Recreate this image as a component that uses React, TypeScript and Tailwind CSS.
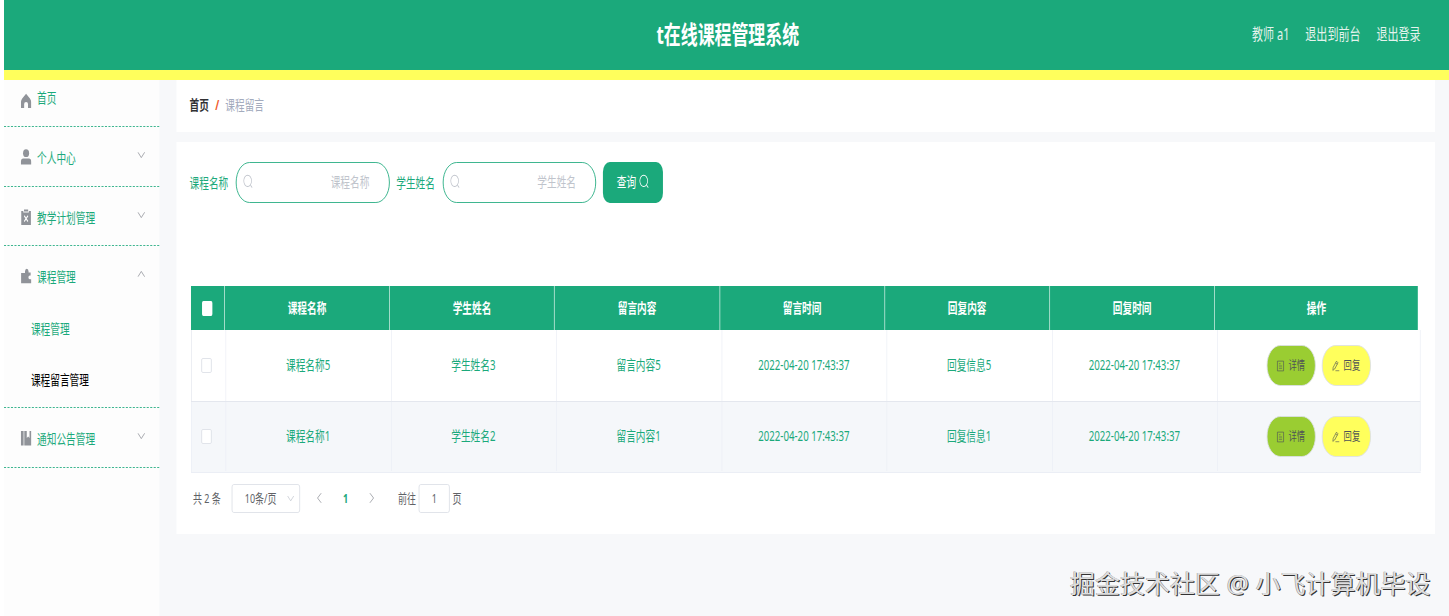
import type { ReactNode } from "react";

type IconProps = { className?: string };

function HomeIcon({ className }: IconProps) {
  return (
    <svg viewBox="0 0 16 16" className={className} fill="currentColor">
      <path d="M8 .8 13.6 5.4Q15.4 7 15.4 9V15H10.8V11Q10.8 9 8 9T5.2 11V15H.6V9Q.6 7 2.4 5.4Z" />
    </svg>
  );
}

function UserIcon({ className }: IconProps) {
  return (
    <svg viewBox="0 0 16 16" className={className} fill="currentColor">
      <ellipse cx="8" cy="4.2" rx="4.4" ry="3.9" />
      <path d="M.5 15.5V13Q.5 9.6 4 9.6H12Q15.5 9.6 15.5 13V15.5Z" />
    </svg>
  );
}

function ClipboardIcon({ className }: IconProps) {
  return (
    <svg viewBox="0 0 16 16" className={className}>
      <path d="M1 2H4V3.6H12V2H15V16H1ZM5 .4H11V2.6H5Z" fill="currentColor" />
      <path d="M5.3 6.8 10.7 12.4M10.7 6.8 5.3 12.4" stroke="#fff" strokeWidth="1.4" />
    </svg>
  );
}

function PuzzleIcon({ className }: IconProps) {
  return (
    <svg viewBox="0 0 16 16" className={className} fill="currentColor">
      <path d="M1 5H6.4V3.4Q6.6 .8 9 .8T11.6 3.4V4.4H14.6V7.6H13.4Q11.4 7.8 11.4 9.4T13.4 11.2H15.5V15.3H.8V5Z" />
    </svg>
  );
}

function NotebookIcon({ className }: IconProps) {
  return (
    <svg viewBox="0 0 16 16" className={className} fill="currentColor">
      <path d="M.5 1H4.4V15.5H.5ZM5.4 1H9V8L11 6.5 13 8V1H15.5V15.5H5.4Z" />
    </svg>
  );
}

function SearchIcon({ className }: IconProps) {
  return (
    <svg viewBox="0 0 16 16" className={className} fill="none" stroke="currentColor" strokeWidth="1.1">
      <circle cx="7.6" cy="7.3" r="6" />
      <path d="m12 11.8 2.6 2.8" />
    </svg>
  );
}

function DocIcon({ className }: IconProps) {
  return (
    <svg viewBox="0 0 16 16" className={className} fill="none" stroke="currentColor">
      <path d="M2 1.5H14V14.5H2ZM5 5H8M5 8H11M5 11H11" />
    </svg>
  );
}

function EditIcon({ className }: IconProps) {
  return (
    <svg viewBox="0 0 16 16" className={className} fill="none" stroke="currentColor">
      <path d="M2.5 13.8 3.2 9.8 9.6 1.6 12.4 3.7 6 12 2.5 13.8ZM8 3.7 10.8 5.8M7.5 14.3H15" />
    </svg>
  );
}

function Chevron({ className }: IconProps) {
  return (
    <svg viewBox="0 0 12 12" className={className} fill="none" stroke="currentColor" strokeWidth="0.9">
      <path d="M1.2 3.3 6 8.6 10.8 3.3" />
    </svg>
  );
}

interface MenuItemProps {
  icon: ReactNode;
  label: string;
  open?: boolean;
}

function MenuTitle({ icon, label, open }: MenuItemProps) {
  return (
    <div className="flex h-[59px] items-center pl-6 pr-5">
      <span className="mt-px text-[#909399]">{icon}</span>
      <span className="ml-2 mt-[2px] flex-1">{label}</span>
      <Chevron className={open ? "mb-[4px] size-3 rotate-180 text-[#909399]" : "mb-[4px] size-3 text-[#909399]"} />
    </div>
  );
}

function Sidebar() {
  return (
    <aside className="h-[536px] w-[225px] shrink-0 bg-[#fdfdfd] text-[#1ba97b]">
      <div className="flex h-[47px] items-start border-b border-dashed border-[#1ba97b] pl-6 pt-[8px]">
        <HomeIcon className="mt-[5px] size-4 text-[#909399]" />
        <span className="ml-2">首页</span>
      </div>
      <div className="border-b border-dashed border-[#1ba97b]">
        <MenuTitle icon={<UserIcon className="size-4" />} label="个人中心" />
      </div>
      <div className="h-[59px] border-b border-dashed border-[#1ba97b]">
        <MenuTitle icon={<ClipboardIcon className="size-4" />} label="教学计划管理" />
      </div>
      <div className="h-[162px] border-b border-dashed border-[#1ba97b]">
        <MenuTitle icon={<PuzzleIcon className="size-4" />} label="课程管理" open />
        <div className="flex h-[48px] items-center pl-[39px]">课程管理</div>
        <div className="flex h-[54px] items-center pl-[39px] text-black">课程留言管理</div>
      </div>
      <div className="border-b border-dashed border-[#1ba97b]">
        <MenuTitle icon={<NotebookIcon className="size-4" />} label="通知公告管理" />
      </div>
    </aside>
  );
}

function SearchField({ label }: { label: string }) {
  return (
    <label className="mr-[10px] flex items-center gap-[10px]">
      <span className="w-[57px] whitespace-nowrap">{label}</span>
      <span className="flex h-[41px] w-[222.5px] items-center justify-between rounded-[20px] border border-[#1ba97b] pb-[2px] pl-[9px] pr-[28px] text-[#c0c4cc]">
        <SearchIcon className="size-[15px]" />
        <span>{label}</span>
      </span>
    </label>
  );
}

const COLUMNS = ["课程名称", "学生姓名", "留言内容", "留言时间", "回复内容", "回复时间", "操作"];

const ROWS = [
  ["课程名称5", "学生姓名3", "留言内容5", "2022-04-20 17:43:37", "回复信息5", "2022-04-20 17:43:37"],
  ["课程名称1", "学生姓名2", "留言内容1", "2022-04-20 17:43:37", "回复信息1", "2022-04-20 17:43:37"],
];

function MessageTable() {
  return (
    <div className="ml-px w-[1782px]">
      <div className="grid h-[44px] w-[1778px] grid-cols-[49px_repeat(6,239.2px)_1fr] bg-[#1ba97b] font-bold text-white">
        <div className="flex items-center justify-center border-r border-[#dff3ec]">
          <span className="mr-px size-[15px] rounded-[2px] bg-white" />
        </div>
        {COLUMNS.map((name) => (
          <div key={name} className="flex items-center justify-center border-r border-[#dff3ec] last:border-r-0">
            {name}
          </div>
        ))}
      </div>
      {ROWS.map((row, i) => (
        <div
          key={row[0]}
          className={
            i % 2
              ? "grid h-[71px] grid-cols-[50px_repeat(6,239.5px)_1fr] border-b border-l border-[#ebeef5] bg-[#f5f7fa] pb-px"
              : "grid h-[72px] grid-cols-[50px_repeat(6,239.5px)_1fr] border-b border-l border-[#e4e7ee] bg-white"
          }
        >
          <div className="flex items-center justify-center border-r border-[#ebeef5]">
            <span className="mr-[6px] size-[15px] rounded-[2px] border border-[#dcdfe6] bg-white" />
          </div>
          {row.map((cell, j) => (
            <div key={j} className="flex items-center justify-center border-r border-[#ebeef5] pb-px pr-px text-[#1ba97b]">
              {cell}
            </div>
          ))}
          <div className="flex items-center justify-center gap-[9px] border-r border-[#ebeef5] pr-px text-xs text-[#4f5357]">
            <button className="flex h-[41px] w-[71px] items-center justify-center gap-[5px] rounded-[20px] border border-[#dcdfe6] bg-[#9acd32]">
              <DocIcon className="size-3" />
              详情
            </button>
            <button className="flex h-[41px] w-[71px] items-center justify-center gap-[5px] rounded-[20px] border border-[#dcdfe6] bg-[#ffff5c]">
              <EditIcon className="size-3" />
              回复
            </button>
          </div>
        </div>
      ))}
    </div>
  );
}

function Pagination() {
  return (
    <div className="mt-[10px] flex h-[30px] items-center pl-[4px] text-[13px] text-[#606266]">
      <span className="w-[56px] whitespace-nowrap">共 2 条</span>
      <div className="flex h-[29px] w-[99px] items-center justify-between rounded-[3px] border border-[#dcdfe6] pl-[18px] pr-[7px]">
        <span>10条/页</span>
        <Chevron className="size-[11px] text-[#c0c4cc]" />
      </div>
      <Chevron className="ml-[22px] size-[12px] rotate-90 text-[#909399]" />
      <span className="w-[64px] text-center font-bold text-[#1ba97b]">1</span>
      <Chevron className="size-[12px] -rotate-90 text-[#909399]" />
      <span className="ml-[32px]">前往</span>
      <span className="ml-[4px] flex h-[29px] w-[45px] items-center justify-center rounded-[3px] border border-[#dcdfe6]">1</span>
      <span className="ml-[4px]">页</span>
    </div>
  );
}

export default function App() {
  return (
    <div className="relative h-[616px] w-[1449px] overflow-hidden bg-white pl-1 font-['Noto_Sans','Noto_Sans_CJK_SC',sans-serif] text-sm">
      {/* The desktop layout is 2095px wide and is condensed to fit the window */}
      <div className="h-[616px] w-[2095px] origin-top-left scale-x-[0.69] bg-[#f7f8fa]">
        <header className="grid h-[80px] grid-cols-[1fr_auto_1fr] items-center border-b-10 border-[#ffff5c] bg-[#1ba97b] text-white">
          <span />
          <h1 className="ml-[3px] text-[24.5px] leading-8 font-bold">t在线课程管理系统</h1>
          <nav className="flex justify-end gap-[23px] pb-[2px] pr-[42px] text-base text-[#e4f3ed]">
            <span>教师 a1</span>
            <span>退出到前台</span>
            <span>退出登录</span>
          </nav>
        </header>

        <div className="flex">
          <Sidebar />
          <main className="ml-[25px] mr-[21px] flex-1">
            <div className="flex h-[52px] items-center bg-white px-[19px] pb-[2px] text-[#a3abbd]">
              <span className="font-bold text-[#303133]">首页</span>
              <span className="mx-[9px] font-bold text-[#f0592b]">/</span>
              <span>课程留言</span>
            </div>

            <section className="mt-[10px] h-[392px] bg-white pl-[20px] pt-[20px]">
              <div className="-ml-px mb-[83px] flex text-[#1ba97b]">
                <SearchField label="课程名称" />
                <SearchField label="学生姓名" />
                <button className="flex h-[41px] w-[87px] items-center justify-center gap-1 rounded-[10px] bg-[#1ba97b] pb-[2px] text-white">
                  查询
                  <SearchIcon className="size-[15px]" />
                </button>
              </div>
              <MessageTable />
              <Pagination />
            </section>
          </main>
        </div>
      </div>

      <p className="absolute bottom-[14px] right-[18.5px] whitespace-nowrap text-[25px] text-[#dedede] [text-shadow:1px_1px_0_#333,-0.5px_-0.5px_0_#999]">
        掘金技术社区 @ 小飞计算机毕设
      </p>
    </div>
  );
}
